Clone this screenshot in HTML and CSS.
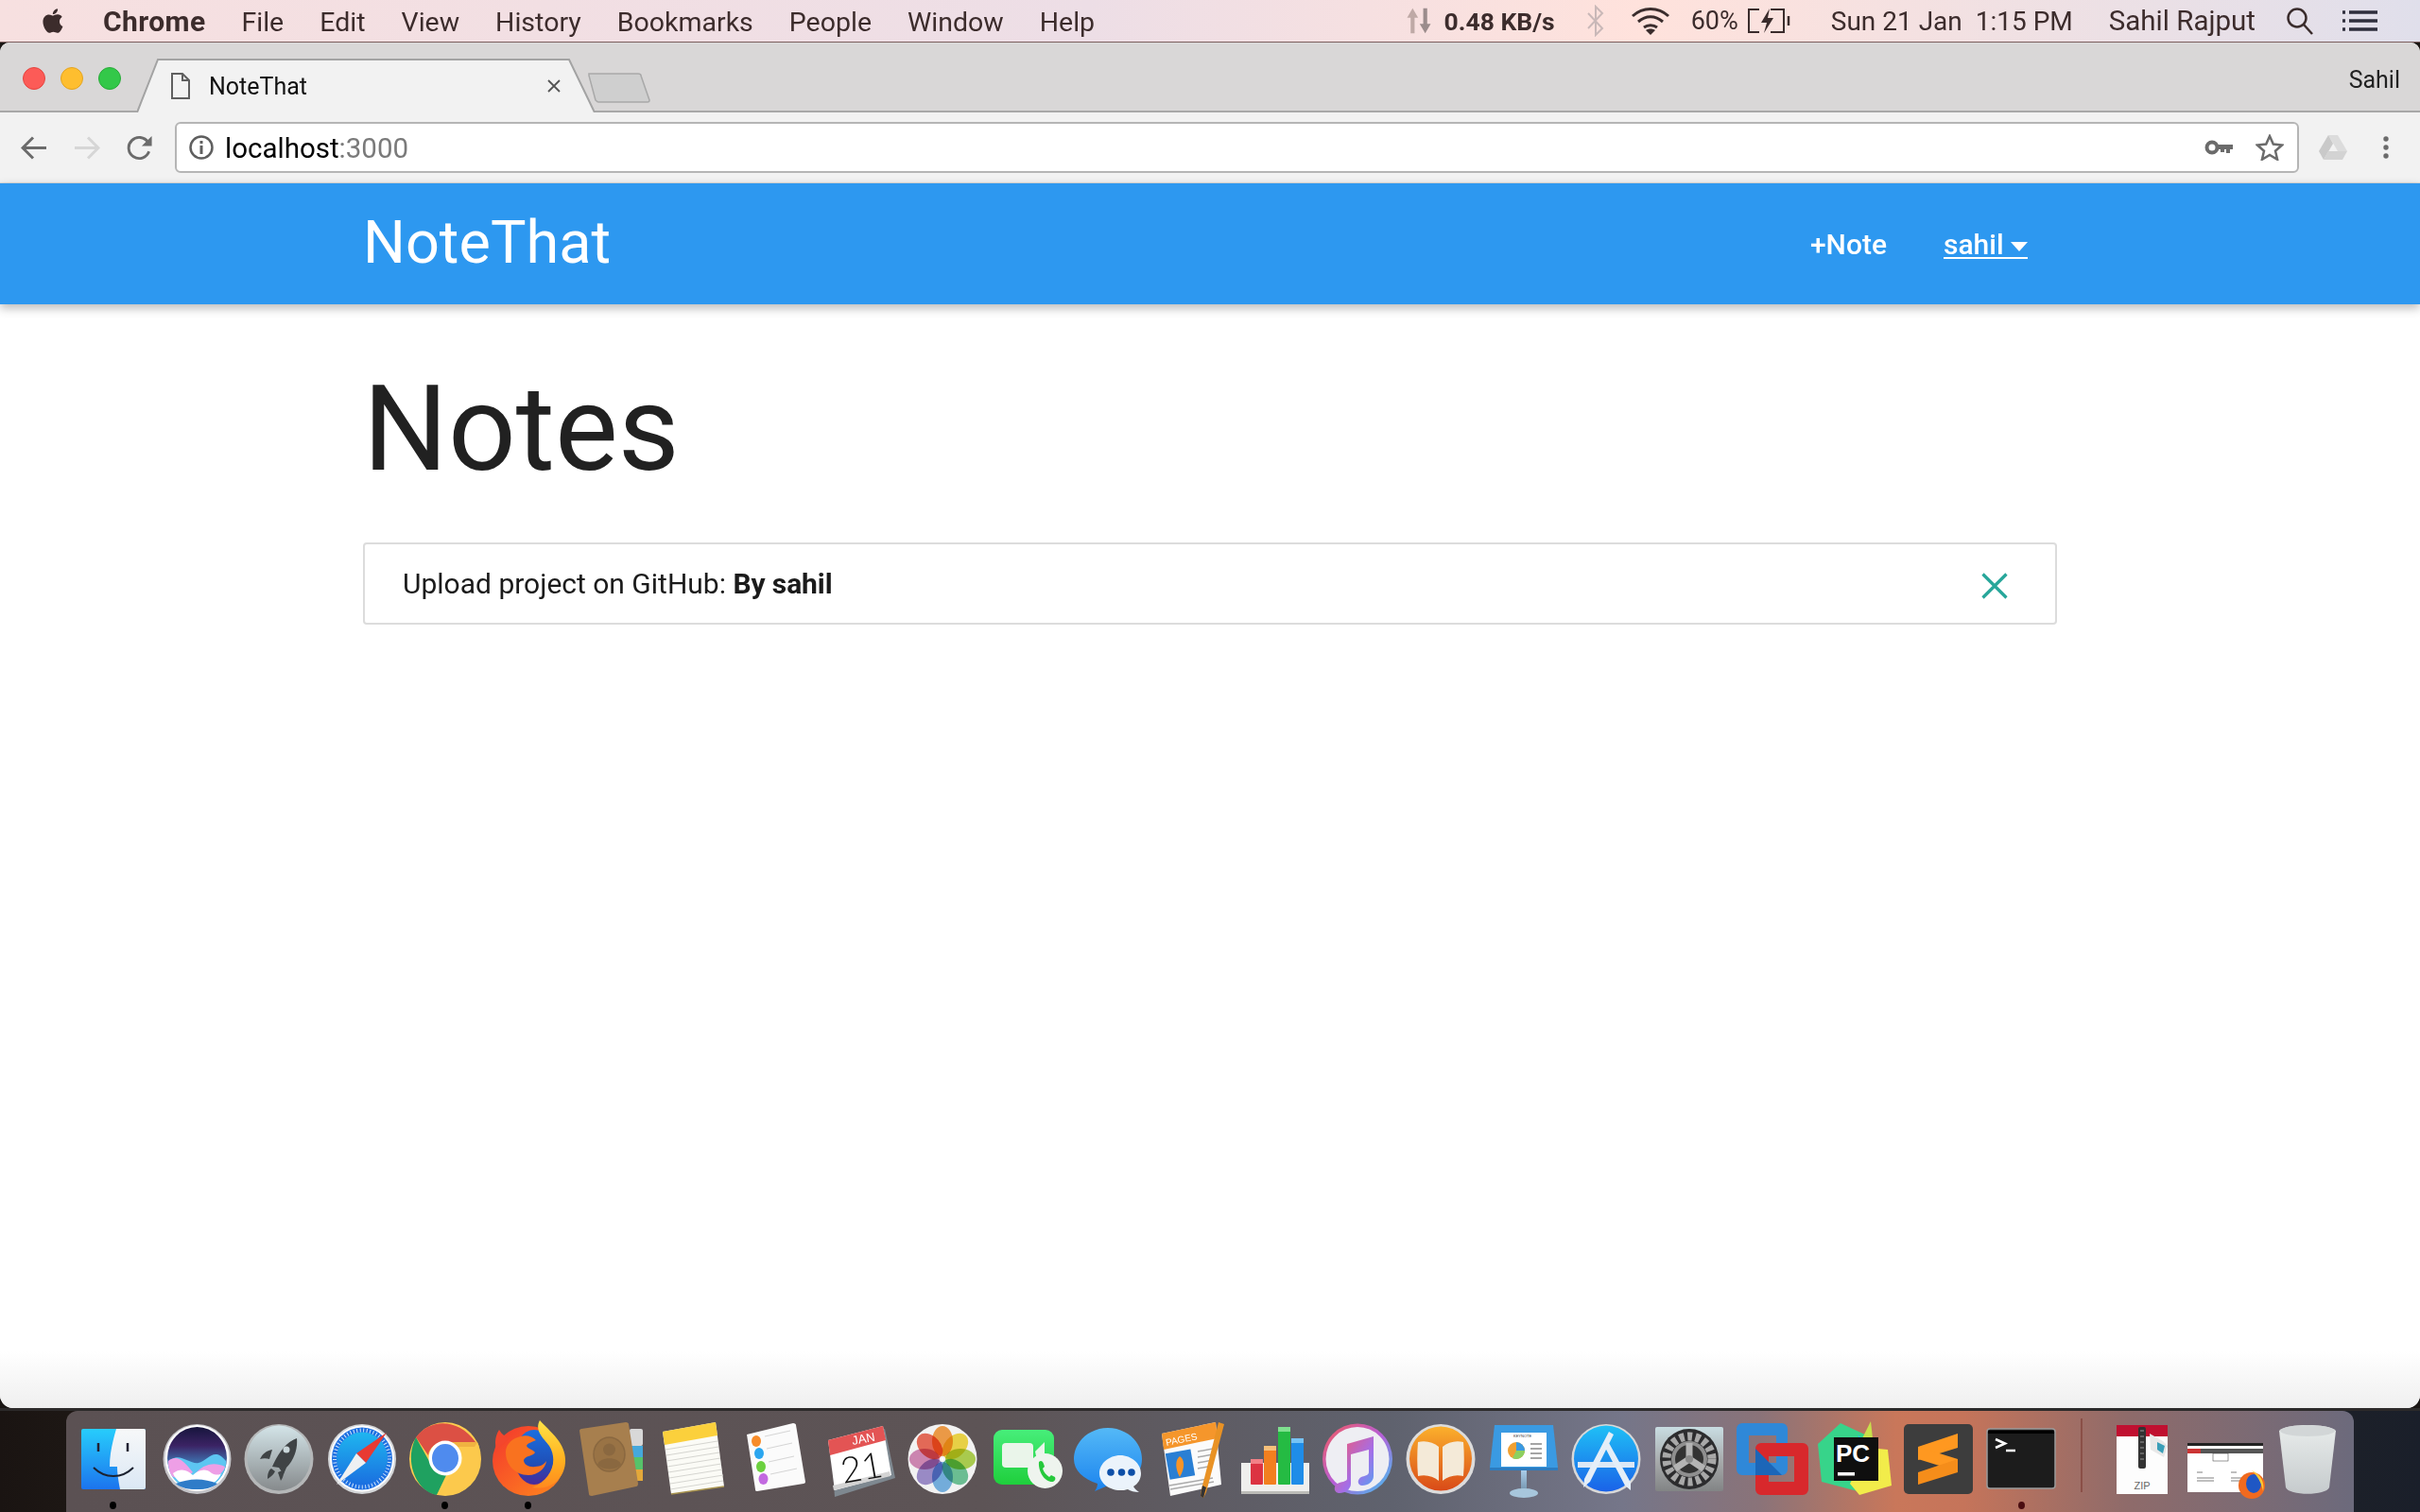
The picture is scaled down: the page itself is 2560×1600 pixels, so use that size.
FILE: index.html
```html
<!DOCTYPE html>
<html lang="en">
<head>
    <meta charset="UTF-8">
    <title>NoteThat</title>
    <link rel="stylesheet" href="styles.css">
</head>
<body>
    <!-- mac menu bar -->
    <div class="menubar">
        <svg class="apple" viewBox="0 0 24 24"><path d="M16.365 1.43c0 1.14-.493 2.27-1.177 3.08-.744.9-1.99 1.57-2.987 1.57-.12 0-.23-.02-.3-.03-.01-.06-.04-.22-.04-.39 0-1.15.572-2.27 1.206-2.98.804-.94 2.142-1.64 3.248-1.68.03.13.05.28.05.43zm4.565 15.71c-.03.07-.463 1.58-1.518 3.12-.945 1.34-1.94 2.71-3.43 2.71-1.517 0-1.9-.88-3.63-.88-1.698 0-2.302.91-3.67.91-1.377 0-2.332-1.26-3.428-2.8-1.287-1.82-2.323-4.63-2.323-7.28 0-4.28 2.797-6.55 5.552-6.55 1.448 0 2.675.95 3.6.95.865 0 2.222-1.01 3.902-1.01.613 0 2.886.06 4.374 2.19-.13.09-2.383 1.37-2.383 4.19 0 3.26 2.854 4.42 2.955 4.45z"/></svg>
        <div class="menu-items">
            <span class="app-name">Chrome</span>
            <span>File</span>
            <span>Edit</span>
            <span>View</span>
            <span>History</span>
            <span>Bookmarks</span>
            <span>People</span>
            <span>Window</span>
            <span>Help</span>
        </div>
        <div class="status-items">
            <svg class="net-arrows" viewBox="0 0 32 36"><path d="M8 2l7 12h-4.500v20h-5V14H1z" fill="#bfa9a6"/><path d="M24 34l7-12h-4.500V2h-5v20H17z" fill="#9b8c8c"/></svg>
            <span class="net-speed">0.48 KB/s</span>
            <svg class="bluetooth" viewBox="0 0 20 34"><path d="M2 9l15 16-7 7V2l7 7L2 25" fill="none" stroke="#c9b8b8" stroke-width="2"/></svg>
            <svg class="wifi" viewBox="0 0 42 30"><path d="M2 10c11-10 27-10 38 0M8 16c8-7 18-7 26 0M14 22c4-3 10-3 14 0" fill="none" stroke="#3a2c2c" stroke-width="3"/><path d="M21 30l-5-5c3-2 7-2 10 0z" fill="#3a2c2c"/></svg>
            <span class="battery-pct">60%</span>
            <svg class="battery" viewBox="0 0 47 28"><path d="M14 2H3v24h11M26 2h14v24H26" fill="none" stroke="#3a2c2c" stroke-width="2"/><path d="M45 9v10" stroke="#3a2c2c" stroke-width="2.500"/><path d="M25 1l-9 15h6l-3 11 10-16h-6z" fill="#3a2c2c"/></svg>
            <span class="clock">Sun 21 Jan&nbsp; 1:15 PM</span>
            <span class="user-name">Sahil Rajput</span>
            <svg class="search" viewBox="0 0 30 30"><circle cx="12" cy="12" r="9.500" fill="none" stroke="#3a2c2c" stroke-width="2.500"/><path d="M19 19l9 10" stroke="#3a2c2c" stroke-width="2.500"/></svg>
            <svg class="list-icon" viewBox="0 0 37 22"><path d="M0 2h3M7 2h30M0 11h3M7 11h30M0 20h3M7 20h30" stroke="#2e2e3c" stroke-width="3.500"/></svg>
        </div>
    </div>

    <div class="window">
        <!-- tabs -->
        <div class="tabstrip">
            <div class="traffic">
                <span class="light red"></span>
                <span class="light yellow"></span>
                <span class="light green"></span>
            </div>
            <div class="tab">
                <svg class="tab-shape" viewBox="0 0 486 57" preserveAspectRatio="none"><path d="M0 57L22 1h435l27 56" fill="#f2f2f2" stroke="#a3a3a3" stroke-width="2"/></svg>
                <svg class="favicon" viewBox="0 0 20 28"><path d="M1 1h11l7 7v19H1zM12 1v7h7" fill="none" stroke="#5f5f5f" stroke-width="2"/></svg>
                <span class="tab-title">NoteThat</span>
                <svg class="tab-close" viewBox="0 0 14 14"><path d="M1 1l12 12M13 1L1 13" stroke="#555" stroke-width="1.800"/></svg>
            </div>
            <svg class="new-tab" viewBox="0 0 66 32"><path d="M1 1h52c2 0 3 1 3 2l9 26c0 1-1 2-2 2H11c-1 0-2-1-3-2L1 3z" fill="#cfcfcf" stroke="#a9a9a9" stroke-width="1.500"/></svg>
            <span class="profile">Sahil</span>
        </div>

        <!-- toolbar -->
        <div class="toolbar">
            <svg class="nav-btn" viewBox="0 0 28 26"><path d="M27 13H3M13 2L2 13l11 11" fill="none" stroke="#6b6b6b" stroke-width="3"/></svg>
            <svg class="nav-btn" viewBox="0 0 28 26"><path d="M1 13h24M15 2l11 11-11 11" fill="none" stroke="#d6d6d6" stroke-width="3"/></svg>
            <svg class="nav-btn" viewBox="0 0 28 28"><path d="M24 18a11.500 11.500 0 1 1-1-10" fill="none" stroke="#6b6b6b" stroke-width="3"/><path d="M27 1v11H16z" fill="#6b6b6b"/></svg>
            <div class="omnibox">
                <svg class="info" viewBox="0 0 26 26"><circle cx="13" cy="13" r="11.500" fill="none" stroke="#5f5f5f" stroke-width="2.500"/><path d="M11.500 11h3v9h-3zM11.500 6h3v3h-3z" fill="#5f5f5f"/></svg>
                <span class="url">localhost<span class="url-port">:3000</span></span>
                <svg class="key" viewBox="0 0 30 16"><circle cx="8" cy="8" r="5.500" fill="none" stroke="#6b6b6b" stroke-width="4"/><path d="M13 5h17v5h-3v4h-4v-4h-2v3h-4v-3h-4z" fill="#6b6b6b"/></svg>
                <svg class="star" viewBox="0 0 30 28"><path d="M15 2l3.800 8.600 9.200.9-7 6.200 2.100 9.100-8.100-4.800-8.100 4.800 2.100-9.100-7-6.200 9.200-.9z" fill="none" stroke="#6b6b6b" stroke-width="2.500"/></svg>
            </div>
            <svg class="drive" viewBox="0 0 32 28"><path d="M11 1h10l10 17H21z" fill="#dcdcdc"/><path d="M11 1l5 9L6 27 1 18z" fill="#c9c9c9"/><path d="M11 18h20l-5 9H6z" fill="#d3d3d3"/></svg>
            <svg class="dots" viewBox="0 0 6 24"><circle cx="3" cy="3" r="2.700"/><circle cx="3" cy="12" r="2.700"/><circle cx="3" cy="21" r="2.700"/></svg>
        </div>

        <!-- page -->
        <div class="page">
            <nav class="navbar">
                <div class="container nav-wrapper">
                    <a class="brand-logo">NoteThat</a>
                    <ul class="nav-links">
                        <li><a class="add-note">+Note</a></li>
                        <li><a class="user-link">sahil&nbsp;<span class="caret"></span></a></li>
                    </ul>
                </div>
            </nav>
            <div class="container">
                <h1>Notes</h1>
                <div class="note-item">
                    <span>Upload project on GitHub: <b>By sahil</b></span>
                    <svg class="delete-icon" viewBox="0 0 28 28"><path d="M1.500 1.500l25 25M26.500 1.500l-25 25" stroke="#26a69a" stroke-width="3.200"/></svg>
                </div>
            </div>
        </div>
    </div>

    <!-- desktop + dock -->
    <div class="desktop">
        <div class="dock">
            <div class="dock-item running">
                <svg viewBox="0 0 88 88"><defs><linearGradient id="fa" x1="0" y1="0" x2="0" y2="1"><stop offset="0" stop-color="#27cdfc"/><stop offset="1" stop-color="#1c74ee"/></linearGradient><linearGradient id="fb" x1="0" y1="0" x2="0" y2="1"><stop offset="0" stop-color="#f7f8f9"/><stop offset="1" stop-color="#dbe8f5"/></linearGradient></defs><rect x="10" y="12" width="68" height="64" rx="2" fill="url(#fa)"/><path d="M47 12h29a2 2 0 0 1 2 2v60a2 2 0 0 1-2 2H51c-2-10-3-17-3-24h-8c0-14 3-26 7-40z" fill="url(#fb)"/><path d="M28 27v9M59 27v9" stroke="#223" stroke-width="2.500"/><path d="M23 53c12 12 30 12 42 0" fill="none" stroke="#1c2230" stroke-width="2"/></svg>
            </div>
            <div class="dock-item">
                <svg viewBox="0 0 88 88"><defs><linearGradient id="sa" x1="0" y1="0" x2="0" y2="1"><stop offset="0" stop-color="#16153c"/><stop offset=".3" stop-color="#3b2364"/><stop offset=".55" stop-color="#3e6aa8"/><stop offset="1" stop-color="#2a63b0"/></linearGradient></defs><ellipse cx="44.500" cy="44" rx="36" ry="37" fill="#c4c4c8"/><ellipse cx="44.500" cy="43" rx="34" ry="35" fill="#fff"/><ellipse cx="44.500" cy="43" rx="31.500" ry="33" fill="url(#sa)"/><path d="M14 48c10-14 22 2 32 0 10-2 16-18 29-2 1 12-10 30-30 30-20 0-31-14-31-28z" fill="#5dc6f2"/><path d="M14 46c10-8 18 2 26 12-8 6-16 8-22 4-3-4-4-10-4-16zM42 60c8-10 20-14 32-8-2 10-20 18-32 8z" fill="#ee9fe6"/><path d="M19 59c8-6 15-4 21 2 6-6 14-8 20-2 4 2 8 2 10 0-3 8-10 14-26 14-14 0-22-6-25-14z" fill="#fff"/><path d="M22 70c14-6 30-6 44 0-6 5-14 6-22 6-8 0-16-1-22-6z" fill="#2f7cc8"/></svg>
            </div>
            <div class="dock-item">
                <svg viewBox="0 0 88 88"><defs><linearGradient id="la" x1="0" y1="0" x2="0" y2="1"><stop offset="0" stop-color="#d3e4e8"/><stop offset="1" stop-color="#868a8c"/></linearGradient></defs><ellipse cx="44" cy="44" rx="36.500" ry="37" fill="#b5b7b8"/><ellipse cx="44" cy="43" rx="33.500" ry="34.500" fill="url(#la)"/><path d="M63 22c1 10-2 22-11 31l-3 7-5-7-7-1c6-13 14-26 26-30z" fill="#3f4345"/><circle cx="52" cy="34" r="3.500" fill="#c9d6d9"/><path d="M37 34c-6 1-10 4-13 10 3-1 7-1 10 0zM50 55c-1 4-1 8-4 12-1-3-2-6-3-9zM36 54c-3 2-4 6-4 11 3-2 6-4 8-8z" fill="#3f4345"/></svg>
            </div>
            <div class="dock-item">
                <svg viewBox="0 0 88 88"><defs><linearGradient id="saf" x1="0" y1="0" x2="0" y2="1"><stop offset="0" stop-color="#1fb6ef"/><stop offset="1" stop-color="#1a6fe0"/></linearGradient></defs><ellipse cx="44" cy="44" rx="36" ry="37" fill="#d4d6d8"/><ellipse cx="44" cy="43.500" rx="34" ry="35" fill="#fff"/><ellipse cx="44" cy="43.500" rx="32" ry="33" fill="#1d6fe2"/><ellipse cx="44" cy="43.500" rx="27" ry="28" fill="url(#saf)"/><ellipse cx="44" cy="43.500" rx="29" ry="30" fill="none" stroke="#cfe6fa" stroke-width="4" stroke-dasharray="1 2.500"/><path d="M70 16L48 48 38 38z" fill="#e83a32"/><path d="M17 71l21-33 10 10z" fill="#eef0f2"/></svg>
            </div>
            <div class="dock-item running">
                <svg viewBox="0 0 88 88"><ellipse cx="44" cy="44" rx="38" ry="39" fill="#fdcc4f"/><path d="M13 21C27 1 58 0 76 26L44 26C34 26 27 32 26 40z" fill="#dc5044"/><path d="M13 21L28 48c3 7 10 11 18 11L35 82C13 78 0 46 13 21z" fill="#1fa160"/><path d="M46 26h32c8 18 1 44-20 54l-23 2 18-24c7-3 10-8 10-14 0-8-7-14-17-18z" fill="#fcc94c"/><path d="M46 26h32l-3 5H50z" fill="#e8a43a" opacity=".6"/><ellipse cx="44" cy="43" rx="17.500" ry="18.500" fill="#fff"/><ellipse cx="44" cy="43" rx="14" ry="15" fill="#4f8bee"/></svg>
            </div>
            <div class="dock-item running">
                <svg viewBox="0 0 88 88"><defs><linearGradient id="ffa" x1="0" y1="0" x2="0" y2="1"><stop offset="0" stop-color="#ffe347"/><stop offset=".6" stop-color="#ffb01f"/><stop offset="1" stop-color="#ff8a1f"/></linearGradient><linearGradient id="ffb" x1="0" y1="0" x2="1" y2="1"><stop offset="0" stop-color="#f3352d"/><stop offset="1" stop-color="#ff8a1d"/></linearGradient><linearGradient id="ffc" x1="0" y1="0" x2="0" y2="1"><stop offset="0" stop-color="#1c6fe0"/><stop offset=".6" stop-color="#1f50b8"/><stop offset="1" stop-color="#4a2a9a"/></linearGradient></defs><ellipse cx="44" cy="46" rx="38" ry="37" fill="url(#ffb)"/><path d="M13 13c3 5 7 8 11 9l-14 12c-2-7-1-15 3-21z" fill="#f3462d"/><ellipse cx="50" cy="42" rx="21" ry="29" fill="url(#ffc)"/><path d="M36 20c6-2 12 0 16 4-4 2-9 3-10 6 1 3 7 4 9 7-2 4-10 3-12 8 0 5 6 8 12 7 6 0 10-3 12-6-1 8-9 15-19 15-15 0-24-12-24-24 0-8 6-15 16-17z" fill="#f9721f"/><path d="M56 3C50 14 60 22 66 30C76 46 68 66 48 74C70 78 84 62 83 44C82 26 68 16 56 3z" fill="url(#ffa)"/></svg>
            </div>
            <div class="dock-item">
                <svg viewBox="0 0 88 88"><rect x="64" y="12" width="14" height="18" rx="2" fill="#d8d8d8"/><rect x="65" y="30" width="13" height="12" fill="#45a8dc"/><rect x="66" y="42" width="12" height="13" fill="#56c26a"/><rect x="67" y="55" width="11" height="12" fill="#e3a83a"/><path d="M11 14c0-1 1-2 2-2L60 5c2 0 3 1 3 2l10 63c0 2-1 3-2 3L24 83c-2 0-3-1-3-2z" fill="#a77f4e"/><ellipse cx="42.500" cy="39" rx="16.500" ry="18" fill="#997345" stroke="#8a6840" stroke-width="1.500"/><circle cx="42.500" cy="34" r="6.500" fill="#8a6840"/><path d="M30 50c2-9 23-9 25 0-6 6-19 6-25 0z" fill="#8a6840"/></svg>
            </div>
            <div class="dock-item">
                <svg viewBox="0 0 88 88"><path d="M11 15L67 5l9 68-56 8z" fill="#fbfbf6"/><path d="M11 15L67 5l2 14-56 10z" fill="#fbd03c"/><path d="M14 34l55-9M15 40l55-9M15 46l56-9M16 52l56-9M17 58l56-9M18 64l56-9M19 70l56-9M19 76l56-9" stroke="#d5d5d0" stroke-width="1"/><path d="M20 81l56-8" stroke="#a8934e" stroke-width="1.500"/></svg>
            </div>
            <div class="dock-item">
                <svg viewBox="0 0 88 88"><path d="M12 18L61 6c2 0 3 1 3 2l10 60c0 1-1 2-2 2L23 78c-2 0-2-1-2-2z" fill="#fbfbfb"/><ellipse cx="22" cy="25" rx="5" ry="6" fill="#f78c2a"/><ellipse cx="25" cy="38" rx="5" ry="6" fill="#2ba6ef"/><ellipse cx="27" cy="52" rx="5" ry="6" fill="#6cd13f"/><ellipse cx="29.500" cy="65" rx="5" ry="6" fill="#c26ae0"/><path d="M31 20l27-6M33 33l27-6M35 47l27-6M37 60l28-6" stroke="#d5d5d5" stroke-width="1"/></svg>
            </div>
            <div class="dock-item">
                <svg viewBox="0 0 88 88"><path d="M13 30L70 12l11 52-64 20z" fill="#7e8890"/><path d="M10 24l58-15 9 52-60 16z" fill="#fff"/><path d="M10 24l58-15 3 15-59 16z" fill="#e35454"/><path d="M15 72l60-15 1 5-60 15z" fill="#d4d4d4"/><text class="cal-month" x="36" y="29" transform="rotate(-10 36 29)">JAN</text><text class="cal-day" x="26" y="70" transform="rotate(-10 26 70)">21</text></svg>
            </div>
            <div class="dock-item">
                <svg viewBox="0 0 88 88"><ellipse cx="44" cy="44" rx="36.500" ry="37" fill="#f2f2f2"/><g class="petals"><ellipse cx="44" cy="25" rx="11" ry="16" fill="#f7a14a"/><ellipse cx="44" cy="25" rx="11" ry="16" fill="#f4dc4a" transform="rotate(45 44 44)"/><ellipse cx="44" cy="25" rx="11" ry="16" fill="#b2d552" transform="rotate(90 44 44)"/><ellipse cx="44" cy="25" rx="11" ry="16" fill="#71c79a" transform="rotate(135 44 44)"/><ellipse cx="44" cy="25" rx="11" ry="16" fill="#79b5e6" transform="rotate(180 44 44)"/><ellipse cx="44" cy="25" rx="11" ry="16" fill="#a191d0" transform="rotate(225 44 44)"/><ellipse cx="44" cy="25" rx="11" ry="16" fill="#d68cba" transform="rotate(270 44 44)"/><ellipse cx="44" cy="25" rx="11" ry="16" fill="#ef6f5c" transform="rotate(315 44 44)"/></g><circle cx="44" cy="44" r="1.500" fill="#fff"/></svg>
            </div>
            <div class="dock-item">
                <svg viewBox="0 0 88 88"><defs><linearGradient id="fta" x1="0" y1="0" x2="0" y2="1"><stop offset="0" stop-color="#47ee7a"/><stop offset="1" stop-color="#1fcf3c"/></linearGradient></defs><rect x="10" y="13" width="64" height="58" rx="9" fill="url(#fta)"/><rect x="19" y="27" width="33" height="26" rx="4" fill="#eaf5ea"/><path d="M54 36l10-10v24l-6 4z" fill="#eaf5ea"/><circle cx="64.500" cy="56.500" r="18.500" fill="#eef4ee"/><path d="M58 47c2-2 4-1 5 2l1 3-2 2c1 4 4 7 7 9l2-2 4 2c1 2 0 4-2 5-8 1-16-10-15-21z" fill="#26c93c"/></svg>
            </div>
            <div class="dock-item">
                <svg viewBox="0 0 88 88"><defs><linearGradient id="ma" x1="0" y1="0" x2="0" y2="1"><stop offset="0" stop-color="#54b9f7"/><stop offset="1" stop-color="#1b83ee"/></linearGradient></defs><path d="M43 11c20 0 36 15 36 33 0 18-16 30-36 28l-14 6c2-3 3-5 3-8C17 65 7 56 7 44c0-18 16-33 36-33z" fill="url(#ma)"/><path d="M56 40c12 0 22 9 22 19 0 6-3 11-8 14 1 2 3 4 6 6-5 0-9-1-12-3-3 1-5 1-8 1-12 0-22-8-22-18 0-10 10-19 22-19z" fill="#ebf3fb"/><circle cx="46" cy="58" r="3.800" fill="#0d4fa8"/><circle cx="57.500" cy="58" r="3.800" fill="#0d4fa8"/><circle cx="68" cy="58" r="3.800" fill="#0d4fa8"/></svg>
            </div>
            <div class="dock-item">
                <svg viewBox="0 0 88 88"><path d="M12 17L69 5l6 66-54 12z" fill="#fbfbfb"/><path d="M12 17L69 5l2 17-57 12z" fill="#f5962b"/><text class="pages-label" x="17" y="30" transform="rotate(-12 17 30)">PAGES</text><rect x="18" y="36" width="27" height="28" fill="#2a7fd4" transform="rotate(-10 30 50)"/><path d="M31 41c5 3 6 12 0 22-5-9-5-18 0-22z" fill="#f79428"/><path d="M50 36l16-3M50 42l16-3M50 48l16-3M50 54l16-3M20 72l46-8M21 76l46-8" stroke="#aaa" stroke-width="1.500"/><path d="M72 5l6 2-19 72-3 6-3-2 1-7z" fill="#e99224"/><path d="M55 72l4 2-3 11-3-2z" fill="#333"/></svg>
            </div>
            <div class="dock-item">
                <svg viewBox="0 0 88 88"><path d="M9 48h72v30H9z" fill="#efefed"/><path d="M9 78h72v3H9z" fill="#bcbcb8"/><rect x="19" y="44" width="13" height="27" rx="1" fill="#dc3342"/><rect x="19" y="44" width="13" height="5" fill="#f28086"/><rect x="33" y="30" width="13" height="41" rx="1" fill="#f27f1f"/><rect x="33" y="30" width="13" height="5" fill="#f7c07a"/><rect x="48" y="10" width="13" height="61" rx="1" fill="#25bb43"/><rect x="48" y="10" width="13" height="5" fill="#7fe08f"/><rect x="62" y="22" width="13" height="49" rx="1" fill="#1f8de8"/><rect x="62" y="22" width="13" height="5" fill="#76c3f5"/></svg>
            </div>
            <div class="dock-item">
                <svg viewBox="0 0 88 88"><defs><linearGradient id="ita" x1="0" y1="0" x2="1" y2="1"><stop offset="0" stop-color="#f55a5a"/><stop offset=".5" stop-color="#b65ed8"/><stop offset="1" stop-color="#3cc8f2"/></linearGradient><linearGradient id="itb" x1="0" y1="0" x2="1" y2="1"><stop offset="0" stop-color="#f8566a"/><stop offset=".6" stop-color="#a46ee8"/><stop offset="1" stop-color="#4fa6f2"/></linearGradient></defs><ellipse cx="44" cy="44" rx="37" ry="37.500" fill="url(#ita)"/><ellipse cx="44" cy="44" rx="33.500" ry="34" fill="#eeeef3"/><path d="M33 28l28-8v42c0 6-6 10-12 10-5 0-6-6-1-9 3-1 8-2 8-5V34l-19 5v31c0 6-6 10-12 10-6 0-7-7-2-10 3-2 10-2 10-5z" fill="url(#itb)"/></svg>
            </div>
            <div class="dock-item">
                <svg viewBox="0 0 88 88"><defs><linearGradient id="iba" x1="0" y1="0" x2="0" y2="1"><stop offset="0" stop-color="#fbb02c"/><stop offset="1" stop-color="#d94a18"/></linearGradient></defs><ellipse cx="44" cy="44" rx="36.500" ry="37" fill="#dcdcdc"/><ellipse cx="44" cy="43.500" rx="33" ry="34" fill="url(#iba)"/><path d="M42 31c-6-5-14-7-22-5-1 12-1 24 0 36 8-2 16 0 22 5zM46 31c6-5 14-7 22-5 1 12 1 24 0 36-8-2-16 0-22 5z" fill="#f4ead8"/></svg>
            </div>
            <div class="dock-item">
                <svg viewBox="0 0 88 88"><defs><linearGradient id="ka" x1="0" y1="0" x2="0" y2="1"><stop offset="0" stop-color="#b9dcf8"/><stop offset="1" stop-color="#6e8ea8"/></linearGradient></defs><rect x="41" y="50" width="6" height="30" fill="url(#ka)"/><ellipse cx="44" cy="80" rx="15" ry="5" fill="#a7c6dc"/><path d="M13 8h62l5 45H8z" fill="#3a9ae2"/><rect x="8" y="53" width="72" height="3" fill="#2c7cc0"/><rect x="20" y="16" width="48" height="36" fill="#fff"/><text class="keynote-label" x="33" y="21">KEYNOTE</text><circle cx="36" cy="35" r="9" fill="#f0a032"/><path d="M36 35V26a9 9 0 0 1 9 9z" fill="#3a9ae2"/><path d="M36 35h9a9 9 0 0 1-13 8z" fill="#8cd060"/><path d="M51 28h12M51 33h12M51 38h12M51 43h12" stroke="#888" stroke-width="1.500"/></svg>
            </div>
            <div class="dock-item">
                <svg viewBox="0 0 88 88"><defs><linearGradient id="asa" x1="0" y1="0" x2="0" y2="1"><stop offset="0" stop-color="#1fc0f6"/><stop offset="1" stop-color="#1a62e8"/></linearGradient></defs><ellipse cx="44" cy="44" rx="36.500" ry="37" fill="#d8d8d8"/><ellipse cx="44" cy="43.500" rx="34" ry="35" fill="url(#asa)"/><path d="M14 47h60v6H14z" fill="#dce8f5"/><path d="M47 15l5 3-25 50-7 6 1-9zM41 28l5-3 24 44 0 8-6-5z" fill="#e4eef8"/></svg>
            </div>
            <div class="dock-item">
                <svg viewBox="0 0 88 88"><defs><linearGradient id="pa" x1="0" y1="0" x2="0" y2="1"><stop offset="0" stop-color="#c9dde2"/><stop offset=".55" stop-color="#a6a9aa"/><stop offset="1" stop-color="#828485"/></linearGradient></defs><rect x="8" y="10" width="72" height="68" rx="2" fill="url(#pa)"/><ellipse cx="44" cy="44" rx="31" ry="32" fill="#2c2c2e"/><circle cx="44" cy="44" r="24" fill="none" stroke="#a8a8a8" stroke-width="9" stroke-dasharray="5 3.500"/><circle cx="44" cy="44" r="19" fill="#8f8f8f"/><circle cx="44" cy="44" r="15" fill="#333"/><path d="M44 44V27M44 44L29 54M44 44l15 10" stroke="#b4b4b4" stroke-width="7"/><circle cx="44" cy="44" r="4" fill="#8a8a8a"/></svg>
            </div>
            <div class="dock-item">
                <svg viewBox="0 0 88 88"><path fill-rule="evenodd" d="M12 6h42a6 6 0 0 1 6 6v43a6 6 0 0 1-6 6H12a6 6 0 0 1-6-6V12a6 6 0 0 1 6-6zM19 19v29h29V19z" fill="#2f88d8"/><path fill-rule="evenodd" d="M32 27h44a6 6 0 0 1 6 6v43a6 6 0 0 1-6 6H32a6 6 0 0 1-6-6V33a6 6 0 0 1 6-6zM40 41v27h27V41z" fill="#d8282c"/><path d="M26 33v28h28z" fill="#1c66b8"/></svg>
            </div>
            <div class="dock-item">
                <svg viewBox="0 0 88 88"><path d="M28 6l30 14 8 24-20 34-38-10-4-40z" fill="#37d48a"/><path d="M60 4l4 36-22 0z" fill="#c8e04a"/><path d="M46 18l30 28-10 16z" fill="#22c0ee"/><path d="M38 70l10 12 34-10-4-38-20-2z" fill="#f2ec4a"/><rect x="21" y="21" width="47" height="46" fill="#0f0f0f"/><text class="pc-label" x="23" y="47">PC</text><rect x="25" y="58" width="18" height="3.500" fill="#fff"/></svg>
            </div>
            <div class="dock-item">
                <svg viewBox="0 0 88 88"><rect x="8" y="7" width="73" height="74" rx="5" fill="#3d3d3d"/><path d="M23 31l42-14v15L23 45z" fill="#ff9820"/><path d="M23 31v13l42 13V44z" fill="#ff9820"/><path d="M23 58l42-14v14L23 71z" fill="#f58d1a"/></svg>
            </div>
            <div class="dock-item running is-terminal">
                <svg viewBox="0 0 88 88"><rect x="8" y="12" width="72" height="63" rx="3" fill="#1c1c1c" stroke="#9a9a9a" stroke-width="1.500"/><rect x="9" y="14" width="70" height="3" fill="#000"/><path d="M17 23l10 4.500-10 4.500" fill="none" stroke="#fff" stroke-width="2.500"/><path d="M28 35h10" stroke="#fff" stroke-width="2.500"/></svg>
            </div>
            <div class="dock-sep"></div>
            <div class="dock-item">
                <svg viewBox="0 0 88 88"><rect x="17" y="8" width="54" height="73" fill="#fdfdfd"/><path d="M17 8h54v12H17z" fill="#c01030"/><rect x="40" y="10" width="8" height="44" rx="2" fill="#333"/><path d="M42 14h4M42 20h4M42 26h4M42 32h4M42 38h4M42 44h4" stroke="#999" stroke-width="1"/><path d="M52 17l14 8 5 5-4 12-14-8z" fill="#e8e8e8"/><path d="M60 26l8 4-2 8-6-4z" fill="#3a9eb8"/><text class="zip-label" x="44" y="76">ZIP</text></svg>
            </div>
            <div class="dock-item">
                <svg viewBox="0 0 88 88"><rect x="4" y="27" width="80" height="52" fill="#fff"/><rect x="4" y="27" width="80" height="3" fill="#222"/><rect x="4" y="33" width="80" height="5" fill="#555"/><rect x="4" y="33" width="14" height="5" fill="#cc3333"/><rect x="31" y="38" width="16" height="8" fill="#fff" stroke="#333" stroke-width=".500"/><path d="M14 64h18M14 67h18M50 64h18M50 67h18M14 58h6M50 58h6" stroke="#aaa" stroke-width="1.500"/><circle cx="72" cy="72" r="14" fill="#f06a1f"/><ellipse cx="74" cy="70" rx="8" ry="10" fill="#1f57c4"/><path d="M72 56c9 4 14 12 12 22-2-10-6-16-12-22z" fill="#ffcc33"/></svg>
            </div>
            <div class="dock-item">
                <svg viewBox="0 0 88 88"><defs><linearGradient id="ta" x1="0" y1="0" x2="0" y2="1"><stop offset="0" stop-color="#e8eceb"/><stop offset="1" stop-color="#c6cbcd"/></linearGradient></defs><path d="M14 14c8-8 52-8 60 0l-7 60c-3 9-43 9-46 0z" fill="url(#ta)"/><ellipse cx="44" cy="14" rx="29" ry="6" fill="#d2d6d7"/></svg>
            </div>
        </div>
    </div>
</body>
</html>
```

FILE: styles.css
```css
* {
    box-sizing: border-box;
}
html, body {
    margin: 0;
    height: 1600px;
    overflow: hidden;
}
body {
    display: flex;
    flex-direction: column;
    font-family: Roboto, sans-serif;
    background: #1a1614;
}

/* menu bar */
.menubar {
    display: flex;
    align-items: center;
    flex: none;
    height: 45px;
    padding: 0 45px 0 42px;
    border-bottom: 1px solid #7c5f5e;
    background: linear-gradient(to right, #f7e0e0, #eddee6 45%, #ffe2dc 68%, #e0dfeb);
    color: #3c2c2c;
    font-size: 28px;
}
.apple {
    width: 28px;
    height: 34px;
    fill: #3c2c2c;
}
.menu-items {
    display: flex;
    align-items: baseline;
    gap: 38px;
    margin-left: 39px;
    font-size: 28.500px;
}
.app-name {
    font-size: 30px;
    font-weight: 700;
    letter-spacing: 0.4px;
}
.status-items {
    display: flex;
    align-items: center;
    margin-left: auto;
}
.net-arrows {
    width: 32px;
    height: 30px;
}
.net-speed {
    margin-left: 11px;
    font-size: 26.500px;
    font-weight: 700;
}
.bluetooth {
    width: 20px;
    height: 34px;
    margin-left: 33px;
}
.wifi {
    width: 42px;
    height: 30px;
    margin-left: 27px;
}
.battery-pct {
    margin-left: 22px;
    font-size: 27px;
}
.battery {
    width: 47px;
    height: 28px;
    margin-left: 8px;
}
.clock {
    margin-left: 43px;
}
.user-name {
    margin-left: 38px;
    font-size: 29.500px;
}
.search {
    width: 30px;
    height: 30px;
    margin-left: 32px;
}
.list-icon {
    width: 37px;
    height: 22px;
    margin-left: 30px;
}

/* browser window */
.window {
    display: flex;
    flex-direction: column;
    flex: none;
    height: 1445px;
    border-radius: 10px 10px 14px 14px;
    overflow: hidden;
    background: #fff;
}
.tabstrip {
    display: flex;
    align-items: flex-end;
    flex: none;
    height: 74px;
    border-bottom: 2px solid #a8a8a8;
    background: #d9d7d7;
}
.traffic {
    display: flex;
    gap: 16px;
    align-self: center;
    margin-left: 24px;
    margin-top: 4px;
}
.light {
    width: 24px;
    height: 24px;
    border-radius: 50%;
}
.red {
    background: #fc5b57;
    border: 1px solid #e5443f;
}
.yellow {
    background: #febe2f;
    border: 1px solid #e3a420;
}
.green {
    background: #33c849;
    border: 1px solid #28ab38;
}
.tab {
    position: relative;
    display: flex;
    align-items: center;
    width: 486px;
    height: 57px;
    margin-left: 17px;
    margin-bottom: -2px;
    padding: 0 38px 0 36px;
}
.tab-shape {
    position: absolute;
    left: 0;
    top: 0;
    width: 100%;
    height: 100%;
}
.favicon, .tab-title, .tab-close {
    position: relative;
}
.favicon {
    width: 20px;
    height: 28px;
}
.tab-title {
    margin-left: 20px;
    margin-top: 2px;
    font-size: 25px;
    color: #111;
}
.tab-close {
    width: 14px;
    height: 14px;
    margin-left: auto;
}
.new-tab {
    width: 66px;
    height: 32px;
    margin-left: -9px;
    margin-bottom: 8px;
}
.profile {
    align-self: center;
    margin-left: auto;
    margin-right: 21px;
    margin-top: 6px;
    font-size: 25px;
    color: #222;
}

/* toolbar */
.toolbar {
    display: flex;
    align-items: center;
    flex: none;
    height: 75px;
    padding: 0 22px;
    background: #f2f2f2;
    border-bottom: 1px solid #dcdcdc;
}
.nav-btn {
    width: 28px;
    height: 27px;
    margin-right: 28px;
}
.omnibox {
    display: flex;
    align-items: center;
    width: 2247px;
    height: 54px;
    margin-left: -5px;
    padding: 0 14px 0 13px;
    border: 2px solid #b5b5b5;
    border-radius: 6px;
    background: #fff;
}
.info {
    width: 26px;
    height: 26px;
}
.url {
    margin-left: 12px;
    margin-top: 2px;
    font-size: 29.500px;
    color: #000;
}
.url-port {
    color: #7a7a7a;
}
.key {
    width: 30px;
    height: 16px;
    margin-left: auto;
}
.star {
    width: 30px;
    height: 28px;
    margin-left: 24px;
}
.drive {
    width: 32px;
    height: 28px;
    margin-left: 20px;
}
.dots {
    width: 6px;
    height: 24px;
    margin-left: 37px;
    fill: #6b6b6b;
}

/* page */
.page {
    flex: 1;
    background: linear-gradient(to bottom, #fff calc(100% - 60px), #efefef);
}
.container {
    width: 1790px;
    margin: 0 auto;
}
.navbar {
    height: 128px;
    background: #2d98f0;
    box-shadow: 0 4px 10px rgba(0, 0, 0, 0.28);
    color: #fff;
}
.nav-wrapper {
    display: flex;
    align-items: center;
    justify-content: space-between;
    height: 100%;
}
.brand-logo {
    margin: -3px 0 0 -1px;
    font-size: 63px;
}
.nav-links {
    display: flex;
    align-items: center;
    margin: 0;
    padding: 0;
    list-style: none;
    font-size: 30px;
    font-weight: 500;
}
.nav-links a {
    padding: 0 30px;
}
.user-link {
    display: inline-block;
    margin: 0 30px;
    line-height: 26px;
    border-bottom: 2px solid #fff;
}
.nav-links .user-link {
    padding: 0;
}
.caret {
    display: inline-block;
    width: 0;
    height: 0;
    margin-bottom: 3px;
    border-left: 9px solid transparent;
    border-right: 9px solid transparent;
    border-top: 10px solid #fff;
}
h1 {
    margin: 63px 0 50px -1px;
    font-size: 126px;
    font-weight: 400;
    line-height: 1.1;
    color: #212121;
}
.note-item {
    display: flex;
    align-items: flex-start;
    justify-content: space-between;
    height: 87px;
    margin: 0 -1px;
    padding: 19px 50px 19px 40px;
    border: 2px solid #dcdcdc;
    border-radius: 4px;
    font-size: 30px;
    line-height: 45px;
    color: #1b1b1b;
}
.note-item b {
    font-weight: 700;
    letter-spacing: -0.1px;
}
.delete-icon {
    width: 28px;
    height: 28px;
    margin-top: 11px;
}

/* dock */
.desktop {
    flex: 1;
    border-top: 3px solid #2c2a2a;
    background: linear-gradient(to right, #1a1412 0, #1d1714 70px, #1c2029 2490px, #1a1f2a 100%);
}
.dock {
    display: flex;
    width: 2420px;
    height: 107px;
    margin-left: 70px;
    padding: 7px 6px 0;
    border-radius: 12px 12px 0 0;
    background: linear-gradient(to right, #5b5153, #5d5456 40%, #5f626e 58%, #757689 68%, #8a7379 74%, #c9775a 80%, #c5745a 83%, #8f6b6a 90%, #6c6a7c);
}
.dock-item {
    display: flex;
    flex: none;
    flex-direction: column;
    align-items: center;
    width: 87.750px;
    height: 100px;
}
.dock-item svg {
    flex: none;
    width: 88px;
    height: 88px;
}
.petals ellipse {
    mix-blend-mode: multiply;
}
.running::after {
    content: "";
    width: 7px;
    height: 8px;
    margin-top: 1px;
    border-radius: 50%;
    background: #000;
}
.is-terminal::after {
    background: #4a0d10;
}
.dock-sep {
    flex: none;
    width: 40px;
}
.dock-sep::before {
    content: "";
    display: block;
    width: 2px;
    height: 78px;
    margin: 1px 0 0 19px;
    background: #8a4f47;
}

/* text inside dock icons */
.cal-month {
    font: 13px "Liberation Sans", sans-serif;
    fill: #fff;
}
.cal-day {
    font: 300 38px Lato, sans-serif;
    fill: #111;
}
.pages-label {
    font: 10px "Liberation Sans", sans-serif;
    fill: #fff;
}
.keynote-label {
    font: 4px "Liberation Sans", sans-serif;
    fill: #333;
}
.pc-label {
    font: 700 26px "Liberation Sans", sans-serif;
    fill: #fff;
}
.zip-label {
    font: 11px "Liberation Sans", sans-serif;
    fill: #666;
    text-anchor: middle;
}
```
